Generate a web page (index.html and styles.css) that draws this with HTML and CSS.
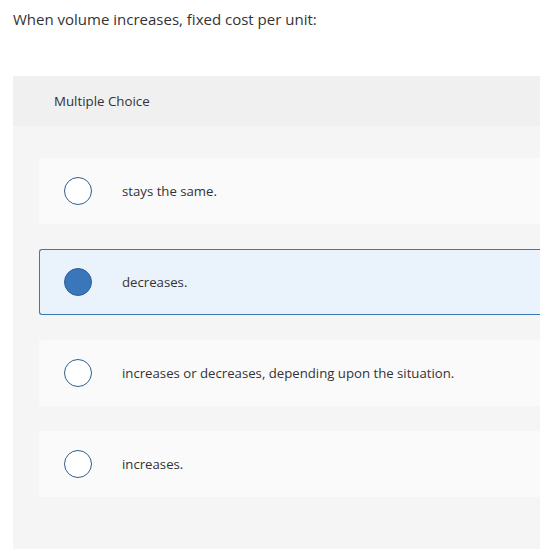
FILE: index.html
```html
<!DOCTYPE html>
<html>
<head>
<meta charset="utf-8">
<link rel="stylesheet" href="styles.css">
</head>
<body>
<div class="page">
  <p class="question">When volume increases, fixed cost per unit:</p>
  <div class="panel">
    <div class="panel-head">Multiple Choice</div>
    <div class="panel-body">
      <div class="option"><span class="radio"></span><span class="label">stays the same.</span></div>
      <div class="option selected"><span class="radio"></span><span class="label">decreases.</span></div>
      <div class="option"><span class="radio"></span><span class="label">increases or decreases, depending upon the situation.</span></div>
      <div class="option"><span class="radio"></span><span class="label">increases.</span></div>
    </div>
  </div>
</div>
</body>
</html>
```
FILE: styles.css
```css
html, body {
  margin: 0;
  padding: 0;
  overflow: hidden;
  background: #ffffff;
}
.page {
  width: 540px;
  box-sizing: border-box;
  padding-left: 13px;
  font-family: "Open Sans", "Liberation Sans", sans-serif;
  color: #333333;
}
.question {
  margin: 0;
  padding-top: 9px;
  font-size: 15px;
  line-height: 20px;
  height: 76px;
  box-sizing: border-box;
}
.panel {
  height: 473px;
  background: #f5f5f5;
}
.panel-head {
  height: 50px;
  background: #f0f0f0;
  padding-left: 41px;
  font-size: 13.3px;
  line-height: 50px;
}
.panel-body {
  padding: 32px 0 0 26px;
  display: flex;
  flex-direction: column;
  gap: 25px;
}
.option {
  height: 66px;
  box-sizing: border-box;
  background: #fafafa;
  border-radius: 3px 0 0 3px;
  display: flex;
  align-items: center;
  padding-left: 25px;
  font-size: 13.2px;
}
.option.selected {
  background: #eaf2fb;
  border: 1px solid #3b78b8;
  border-right: none;
  padding-left: 24px;
}
.radio {
  width: 28px;
  height: 28px;
  box-sizing: border-box;
  border: 1.5px solid #2f5f8f;
  border-radius: 50%;
  background: #ffffff;
  flex: none;
}
.selected .radio {
  background: #3a76b9;
  border-color: #2f5f95;
}
.label {
  margin-left: 30px;
}
```
